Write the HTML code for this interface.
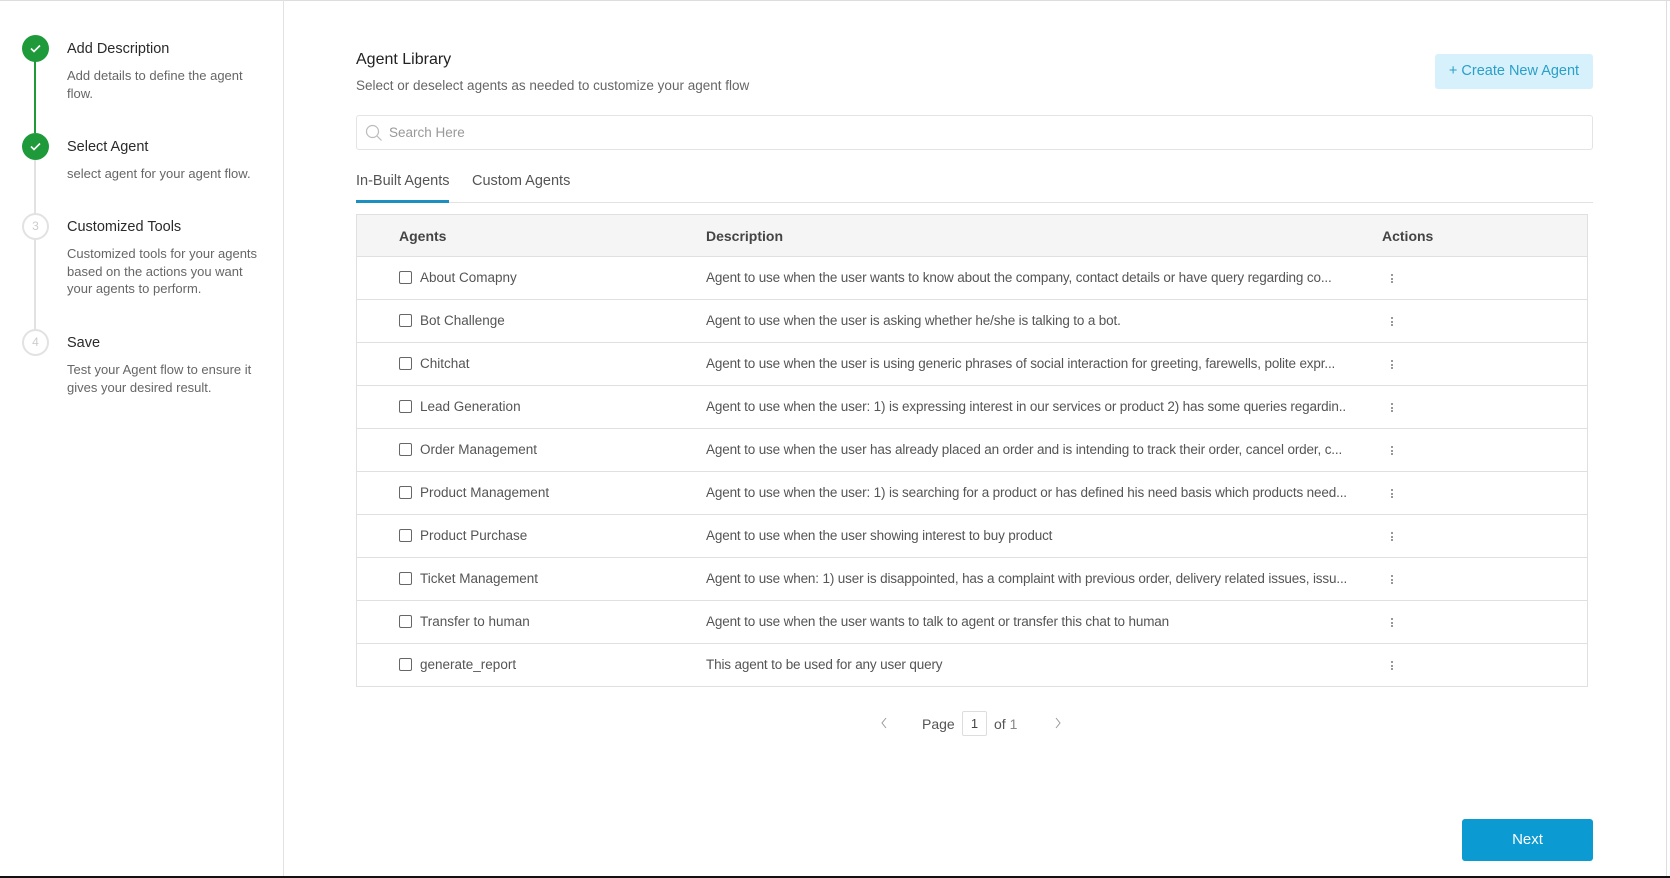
<!DOCTYPE html>
<html><head><meta charset="utf-8"><style>
*{box-sizing:border-box;margin:0;padding:0}
body{width:1670px;height:878px;background:#fff;font-family:"Liberation Sans",sans-serif;color:#333;position:relative;overflow:hidden}
.abs{position:absolute}
.side{left:0;top:0;width:284px;height:876px;border-right:1px solid #e2e2e2}
.top{left:0;top:0;width:1670px;height:1px;background:#ddd}
.circ{width:27px;height:27px;border-radius:50%;left:22px}
.done{background:#1e9a3a}
.todo{border:2px solid #e2e2e2;color:#ccc;font-size:12px;text-align:center;line-height:23px;background:#fff}
.st{left:67px;font-size:14.5px;color:#2a2a2a}
.sd{left:67px;font-size:13px;color:#666;line-height:17.5px;width:192px}
.row{left:357px;width:1231px;height:43px;border-bottom:1px solid #e0e0e0;font-size:13.5px;color:#555}
.row .cb{position:absolute;left:42px;top:14px;width:13px;height:13px;border:1.5px solid #666;border-radius:2px}
.row .nm{position:absolute;left:63px;top:13px}
.row .ds{position:absolute;left:349px;top:13px;width:640px;white-space:nowrap;overflow:hidden;letter-spacing:-0.15px}
.row .ac{position:absolute;left:1034px;top:17px;width:2px}
.dot{width:2px;height:2px;background:#777;border-radius:1px;margin-bottom:1.5px}
</style></head><body>
<div class="abs top"></div>
<div class="abs side"></div>
<div class="abs" style="left:34px;top:61px;width:2px;height:72px;background:#1e9a3a"></div>
<div class="abs" style="left:34px;top:160px;width:2px;height:170px;background:#e2e2e2"></div>
<div class="abs circ done" style="top:35px"><svg width="27" height="27"><path d="M9 13.5l3 3 6-6" stroke="#fff" stroke-width="1.6" fill="none"/></svg></div>
<div class="abs circ done" style="top:133px"><svg width="27" height="27"><path d="M9 13.5l3 3 6-6" stroke="#fff" stroke-width="1.6" fill="none"/></svg></div>
<div class="abs circ todo" style="top:213px">3</div>
<div class="abs circ todo" style="top:329px">4</div>
<div class="abs st" style="top:41px">Add Description</div>
<div class="abs sd" style="top:67px">Add details to define the agent flow.</div>
<div class="abs st" style="top:139px">Select Agent</div>
<div class="abs sd" style="top:165px">select agent for your agent flow.</div>
<div class="abs st" style="top:219px">Customized Tools</div>
<div class="abs sd" style="top:245px">Customized tools for your agents based on the actions you want your agents to perform.</div>
<div class="abs st" style="top:335px">Save</div>
<div class="abs sd" style="top:361px">Test your Agent flow to ensure it gives your desired result.</div>

<div class="abs" style="left:356px;top:51px;font-size:16px;color:#222">Agent Library</div>
<div class="abs" style="left:356px;top:78px;font-size:13.5px;color:#666">Select or deselect agents as needed to customize your agent flow</div>
<div class="abs" style="left:1435px;top:54px;width:158px;height:35px;background:#d6f1fb;border-radius:3px;color:#2a9fc8;font-size:14.5px;text-align:center;line-height:35px">+ Create New Agent</div>
<div class="abs" style="left:356px;top:115px;width:1237px;height:35px;border:1px solid #e4e4e4;border-radius:3px"></div>
<svg class="abs" style="left:365px;top:124px" width="18" height="18"><circle cx="7.5" cy="7.5" r="6" stroke="#bbb" stroke-width="1.2" fill="none"/><path d="M12 12l4.5 4.5" stroke="#bbb" stroke-width="1.2"/></svg>
<div class="abs" style="left:389px;top:125px;font-size:13.5px;color:#999">Search Here</div>
<div class="abs" style="left:356px;top:173px;font-size:14.5px;color:#555">In-Built Agents</div>
<div class="abs" style="left:472px;top:173px;font-size:14.5px;color:#555">Custom Agents</div>
<div class="abs" style="left:356px;top:202px;width:1237px;height:1px;background:#e2e2e2"></div>
<div class="abs" style="left:356px;top:200px;width:93px;height:3px;background:#1b8fbf"></div>

<div class="abs" style="left:356px;top:214px;width:1232px;height:473px;border:1px solid #e0e0e0"></div>
<div class="abs" style="left:357px;top:215px;width:1230px;height:42px;background:#f5f5f5;border-bottom:1px solid #e0e0e0;font-size:14px;font-weight:bold;color:#444">
<span class="abs" style="left:42px;top:13px">Agents</span><span class="abs" style="left:349px;top:13px">Description</span><span class="abs" style="left:1025px;top:13px">Actions</span></div>

<div class="abs row" style="top:257px"><div class="cb"></div><span class="nm">About Comapny</span><span class="ds">Agent to use when the user wants to know about the company, contact details or have query regarding co...</span><div class="ac"><div class="dot"></div><div class="dot"></div><div class="dot"></div></div></div>
<div class="abs row" style="top:300px"><div class="cb"></div><span class="nm">Bot Challenge</span><span class="ds">Agent to use when the user is asking whether he/she is talking to a bot.</span><div class="ac"><div class="dot"></div><div class="dot"></div><div class="dot"></div></div></div>
<div class="abs row" style="top:343px"><div class="cb"></div><span class="nm">Chitchat</span><span class="ds">Agent to use when the user is using generic phrases of social interaction for greeting, farewells, polite expr...</span><div class="ac"><div class="dot"></div><div class="dot"></div><div class="dot"></div></div></div>
<div class="abs row" style="top:386px"><div class="cb"></div><span class="nm">Lead Generation</span><span class="ds">Agent to use when the user: 1) is expressing interest in our services or product 2) has some queries regardin...</span><div class="ac"><div class="dot"></div><div class="dot"></div><div class="dot"></div></div></div>
<div class="abs row" style="top:429px"><div class="cb"></div><span class="nm">Order Management</span><span class="ds">Agent to use when the user has already placed an order and is intending to track their order, cancel order, c...</span><div class="ac"><div class="dot"></div><div class="dot"></div><div class="dot"></div></div></div>
<div class="abs row" style="top:472px"><div class="cb"></div><span class="nm">Product Management</span><span class="ds">Agent to use when the user: 1) is searching for a product or has defined his need basis which products need...</span><div class="ac"><div class="dot"></div><div class="dot"></div><div class="dot"></div></div></div>
<div class="abs row" style="top:515px"><div class="cb"></div><span class="nm">Product Purchase</span><span class="ds">Agent to use when the user showing interest to buy product</span><div class="ac"><div class="dot"></div><div class="dot"></div><div class="dot"></div></div></div>
<div class="abs row" style="top:558px"><div class="cb"></div><span class="nm">Ticket Management</span><span class="ds">Agent to use when: 1) user is disappointed, has a complaint with previous order, delivery related issues, issu...</span><div class="ac"><div class="dot"></div><div class="dot"></div><div class="dot"></div></div></div>
<div class="abs row" style="top:601px"><div class="cb"></div><span class="nm">Transfer to human</span><span class="ds">Agent to use when the user wants to talk to agent or transfer this chat to human</span><div class="ac"><div class="dot"></div><div class="dot"></div><div class="dot"></div></div></div>
<div class="abs row" style="top:644px;border-bottom:none"><div class="cb"></div><span class="nm">generate_report</span><span class="ds">This agent to be used for any user query</span><div class="ac"><div class="dot"></div><div class="dot"></div><div class="dot"></div></div></div>

<svg class="abs" style="left:879px;top:716px" width="10" height="14"><path d="M7 2L3 7l4 5" stroke="#999" stroke-width="1" fill="none"/></svg>
<div class="abs" style="left:922px;top:716px;font-size:14px;color:#555">Page</div>
<div class="abs" style="left:962px;top:711px;width:25px;height:25px;border:1px solid #ddd;border-radius:2px;font-size:13px;text-align:center;line-height:23px;color:#444">1</div>
<div class="abs" style="left:994px;top:716px;font-size:14px;color:#555">of <span style="color:#888">1</span></div>
<svg class="abs" style="left:1053px;top:716px" width="10" height="14"><path d="M3 2l4 5-4 5" stroke="#999" stroke-width="1" fill="none"/></svg>

<div class="abs" style="left:1462px;top:819px;width:131px;height:42px;background:#0b9ad1;border-radius:3px;color:#fff;font-size:15px;text-align:center;line-height:42px">Next</div>
<div class="abs" style="left:1666px;top:0;width:1px;height:876px;background:#ddd"></div>
<div class="abs" style="left:0;top:876px;width:1670px;height:2px;background:#111"></div>
</body></html>
